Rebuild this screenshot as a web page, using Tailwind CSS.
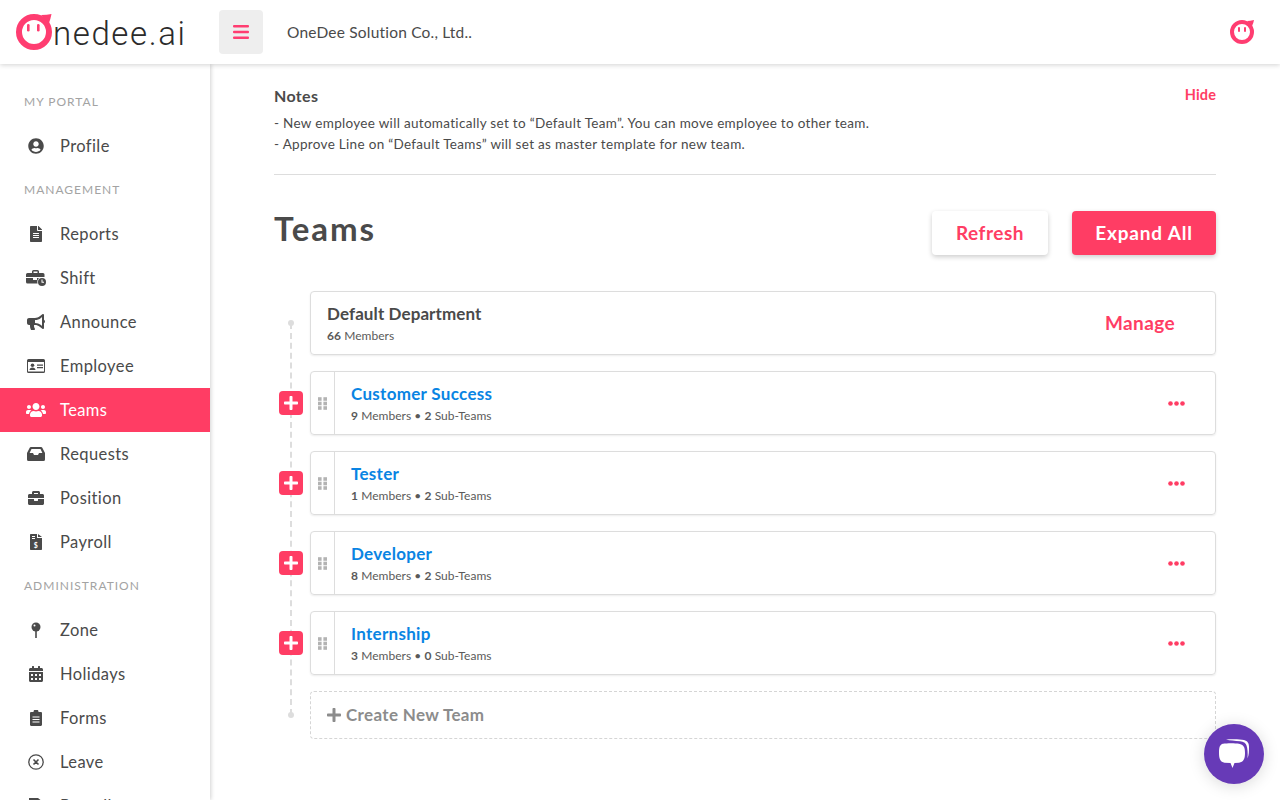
<!DOCTYPE html>
<html lang="en">
<head>
  <meta charset="UTF-8" />
  <meta name="viewport" content="width=device-width, initial-scale=1.0" />
  <script src="https://cdn.jsdelivr.net/npm/@tailwindcss/browser@4"></script>
  <title>Teams</title>
</head>
<body class="h-screen overflow-hidden bg-white font-['Lato','Noto_Sans',sans-serif] text-[#4a4a4a]">
  <!-- top bar -->
  <header class="relative z-20 h-16 bg-white shadow-[0_1px_5px_rgba(0,0,0,0.18)] flex items-center">
    <div class="w-[219px] pl-[15px] flex items-center">
      <svg class="w-[38px] h-[38px] shrink-0" viewBox="0 0 38 38">
        <circle cx="19" cy="19" r="15" fill="#fff" stroke="#ff3d71" stroke-width="6"/>
        <path d="M26 2Q32 2 36.500 1Q35.500 6 34 10z" fill="#ff3d71"/>
        <rect x="12" y="11" width="2.600" height="7.500" rx="1.300" fill="#ff3d71"/>
        <rect x="22" y="11" width="2.600" height="7.500" rx="1.300" fill="#ff3d71"/>
      </svg>
      <span class="font-['Roboto'] font-light text-[33px] leading-none tracking-[1.6px] text-[#2b2b2b] mt-[3px]">nedee.ai</span>
    </div>
    <button class="w-11 h-11 rounded bg-[#eeeeee] flex items-center justify-center">
      <svg class="w-4 h-[14px]" viewBox="0 0 16 14" fill="#ff3d71"><rect width="16" height="2.600" rx="1"/><rect y="5.700" width="16" height="2.600" rx="1"/><rect y="11.400" width="16" height="2.600" rx="1"/></svg>
    </button>
    <span class="ml-6 mt-[2px] text-[15.500px] tracking-[0.2px]">OneDee Solution Co., Ltd..</span>
    <svg class="ml-auto mr-[25px] w-[26px] h-[26px]" viewBox="0 0 26 26">
      <circle cx="13" cy="13" r="10" fill="#fff" stroke="#ff3d71" stroke-width="4"/>
      <path d="M18 2Q21 2 25 1Q24.500 4 23 7z" fill="#ff3d71"/>
      <rect x="9" y="8" width="2" height="5" rx="1" fill="#ff3d71"/>
      <rect x="15" y="8" width="2" height="5" rx="1" fill="#ff3d71"/>
    </svg>
  </header>

  <div class="flex h-[736px]">
    <!-- sidebar -->
    <aside class="relative z-10 w-[210px] shrink-0 h-full overflow-hidden bg-white shadow-[1px_0_4px_rgba(0,0,0,0.18)] pt-4 text-[16.500px] tracking-[0.4px]">
      <div class="h-11 pl-6 flex items-center text-[12px] tracking-[1px] text-[#a3a3a3]">MY PORTAL</div>
      <a class="h-11 flex items-center">
        <span class="w-[60px] flex justify-center pl-[12px]"><svg class="w-[16px] h-[16px]" viewBox="0 0 496 512" fill="#4a4a4a"><path d="M248 8C111 8 0 119 0 256s111 248 248 248 248-111 248-248S385 8 248 8zm0 96c48.6 0 88 39.4 88 88s-39.4 88-88 88-88-39.4-88-88 39.4-88 88-88zm0 344c-58.7 0-111.3-26.6-146.5-68.2 18.8-35.4 55.6-59.8 98.5-59.8 2.4 0 4.8.4 7.1 1.1 13 4.2 26.6 6.9 40.9 6.9 14.3 0 28-2.7 40.9-6.9 2.3-.7 4.7-1.1 7.1-1.1 42.9 0 79.7 24.4 98.5 59.8C359.3 421.4 306.7 448 248 448z"/></svg></span>
        Profile
      </a>
      <div class="h-11 pl-6 flex items-center text-[12px] tracking-[1px] text-[#a3a3a3]">MANAGEMENT</div>
      <a class="h-11 flex items-center">
        <span class="w-[60px] flex justify-center pl-[12px]"><svg class="w-[16px] h-[16px]" viewBox="0 0 384 512" fill="#4a4a4a"><path d="M224 136V0H24C10.7 0 0 10.7 0 24v464c0 13.3 10.7 24 24 24h336c13.3 0 24-10.7 24-24V160H248c-13.2 0-24-10.8-24-24zm64 236c0 6.6-5.4 12-12 12H108c-6.6 0-12-5.4-12-12v-8c0-6.6 5.4-12 12-12h168c6.6 0 12 5.4 12 12v8zm0-64c0 6.6-5.4 12-12 12H108c-6.6 0-12-5.4-12-12v-8c0-6.6 5.4-12 12-12h168c6.6 0 12 5.4 12 12v8zm0-72v8c0 6.6-5.4 12-12 12H108c-6.6 0-12-5.4-12-12v-8c0-6.6 5.4-12 12-12h168c6.6 0 12 5.4 12 12zm96-114.1v6.1H256V0h6.1c6.4 0 12.5 2.5 17 7l97.9 98c4.5 4.5 7 10.6 7 16.9z"/></svg></span>
        Reports
      </a>
      <a class="h-11 flex items-center">
        <span class="w-[60px] flex justify-center pl-[12px]"><svg class="w-[20px] h-[16px]" viewBox="0 0 20 16" fill="#4a4a4a"><path d="M6 1.500A1.500 1.500 0 0 1 7.500 0h4A1.500 1.500 0 0 1 13 1.500V3h4a1.500 1.500 0 0 1 1.500 1.500V7H0V4.500A1.500 1.500 0 0 1 1.500 3H6zM7.500 1.500V3h4V1.500zM0 8h7v2h4V8h2a5.500 5.500 0 0 0-1.400 5.500H1.500A1.500 1.500 0 0 1 0 12z"/><circle cx="16" cy="12" r="4"/><path d="M15.500 9.500h1v2.200h1.500v1h-2.500z" fill="#fff"/></svg></span>
        Shift
      </a>
      <a class="h-11 flex items-center">
        <span class="w-[60px] flex justify-center pl-[12px]"><svg class="w-[18px] h-[16px]" viewBox="0 0 576 512" fill="#4a4a4a"><path d="M576 240c0-23.63-12.95-44.04-32-55.12V32.01C544 23.26 537.02 0 512 0c-7.12 0-14.19 2.38-19.98 7.02l-85.03 68.03C364.28 109.19 310.66 128 256 128H64c-35.35 0-64 28.65-64 64v96c0 35.35 28.65 64 64 64h33.7c-1.39 10.48-2.18 21.14-2.18 32 0 39.77 9.26 77.35 25.56 110.94 5.19 10.69 16.52 17.06 28.4 17.06h74.28c26.05 0 41.69-29.84 25.9-50.56-16.4-21.52-26.15-48.36-26.15-77.44 0-11.11 1.62-21.79 4.41-32H256c54.66 0 108.28 18.81 150.98 52.95l85.03 68.03a32.023 32.023 0 0 0 19.98 7.02c24.92 0 32-22.78 32-32V295.13C563.05 284.04 576 263.63 576 240zm-96 141.42l-33.05-26.44C392.95 311.78 325.12 288 256 288v-96c69.12 0 136.95-23.78 190.95-66.98L480 98.58v282.84z"/></svg></span>
        Announce
      </a>
      <a class="h-11 flex items-center">
        <span class="w-[60px] flex justify-center pl-[12px]"><svg class="w-[18px] h-[14px]" viewBox="0 0 18 14" fill="#4a4a4a"><path fill-rule="evenodd" d="M1.500 0h15A1.500 1.500 0 0 1 18 1.500v11a1.500 1.500 0 0 1-1.500 1.500h-15A1.500 1.500 0 0 1 0 12.500v-11A1.500 1.500 0 0 1 1.500 0zM1 3v9.500h16V3z"/><circle cx="5.500" cy="6.300" r="1.800"/><path d="M2.500 11c0-1.500 1.300-2.400 3-2.400s3 .9 3 2.400zM10 5.500h6v1.200h-6zM10 8h6v1.200h-6z"/></svg></span>
        Employee
      </a>
      <a class="h-11 flex items-center bg-[#ff3d64] text-white">
        <span class="w-[60px] flex justify-center pl-[12px]"><svg class="w-[20px] h-[16px]" viewBox="0 0 640 512" fill="#fff"><path d="M96 224c35.3 0 64-28.7 64-64s-28.7-64-64-64-64 28.7-64 64 28.7 64 64 64zm448 0c35.3 0 64-28.7 64-64s-28.7-64-64-64-64 28.7-64 64 28.7 64 64 64zm32 32h-64c-17.6 0-33.5 7.100-45.100 18.600 40.300 22.100 68.900 62 75.100 109.400h66c17.700 0 32-14.300 32-32v-32c0-35.300-28.700-64-64-64zm-256 0c61.900 0 112-50.100 112-112S381.900 32 320 32 208 82.100 208 144s50.100 112 112 112zm76.800 32h-8.300c-20.800 10-43.900 16-68.500 16s-47.600-6-68.500-16h-8.300C179.600 288 128 339.600 128 403.200V432c0 26.500 21.500 48 48 48h288c26.500 0 48-21.500 48-48v-28.800c0-63.600-51.600-115.200-115.200-115.200zm-223.700-13.400C161.500 263.100 145.600 256 128 256H64c-35.300 0-64 28.700-64 64v32c0 17.700 14.300 32 32 32h65.900c6.300-47.400 34.900-87.300 75.200-109.400z"/></svg></span>
        Teams
      </a>
      <a class="h-11 flex items-center">
        <span class="w-[60px] flex justify-center pl-[12px]"><svg class="w-[18px] h-[14px]" viewBox="0 0 18 14" fill="#4a4a4a"><path fill-rule="evenodd" d="M4 0h10a1.500 1.500 0 0 1 1.300.7L18 6v6.500a1.500 1.500 0 0 1-1.500 1.500h-15A1.500 1.500 0 0 1 0 12.500V6L2.700.7A1.500 1.500 0 0 1 4 0zm.5 2L2.600 6H6l1 2h4l1-2h3.400l-1.900-4z"/></svg></span>
        Requests
      </a>
      <a class="h-11 flex items-center">
        <span class="w-[60px] flex justify-center pl-[12px]"><svg class="w-[16px] h-[16px]" viewBox="0 0 512 512" fill="#4a4a4a"><path d="M320 336c0 8.840-7.160 16-16 16h-96c-8.840 0-16-7.160-16-16v-48H0v144c0 25.600 22.400 48 48 48h416c25.600 0 48-22.400 48-48V288H320v48zm144-208h-80V80c0-25.600-22.400-48-48-48H176c-25.600 0-48 22.400-48 48v48H48c-25.600 0-48 22.400-48 48v80h512v-80c0-25.600-22.400-48-48-48zm-144 0H192V96h128v32z"/></svg></span>
        Position
      </a>
      <a class="h-11 flex items-center">
        <span class="w-[60px] flex justify-center pl-[12px]"><svg class="w-[12px] h-[16px]" viewBox="0 0 12 16"><path d="M0 .7C0 .3.300 0 .7 0H7v4h5v11.300c0 .4-.3.700-.7.700H.7c-.4 0-.7-.3-.7-.7z M8 0l4 3H8z" fill="#4a4a4a"/><path d="M2 2h3v1H2zM2 4h3v1H2z" fill="#fff"/><text x="6" y="13.500" font-size="7" font-weight="700" text-anchor="middle" fill="#fff">$</text></svg></span>
        Payroll
      </a>
      <div class="h-11 pl-6 flex items-center text-[12px] tracking-[1px] text-[#a3a3a3]">ADMINISTRATION</div>
      <a class="h-11 flex items-center">
        <span class="w-[60px] flex justify-center pl-[12px]"><svg class="w-[10px] h-[16px]" viewBox="0 0 10 16"><circle cx="5" cy="5" r="4.500" fill="#4a4a4a"/><rect x="4.200" y="9" width="1.600" height="7" fill="#4a4a4a"/><circle cx="3.500" cy="3.500" r="1" fill="#fff"/></svg></span>
        Zone
      </a>
      <a class="h-11 flex items-center">
        <span class="w-[60px] flex justify-center pl-[12px]"><svg class="w-[14px] h-[16px]" viewBox="0 0 448 512" fill="#4a4a4a"><path d="M0 464c0 26.500 21.500 48 48 48h352c26.500 0 48-21.500 48-48V192H0v272zm320-196c0-6.600 5.400-12 12-12h40c6.600 0 12 5.400 12 12v40c0 6.600-5.400 12-12 12h-40c-6.600 0-12-5.400-12-12v-40zm0 128c0-6.600 5.400-12 12-12h40c6.600 0 12 5.400 12 12v40c0 6.600-5.400 12-12 12h-40c-6.600 0-12-5.400-12-12v-40zM192 268c0-6.600 5.400-12 12-12h40c6.600 0 12 5.400 12 12v40c0 6.600-5.400 12-12 12h-40c-6.600 0-12-5.400-12-12v-40zm0 128c0-6.600 5.400-12 12-12h40c6.600 0 12 5.400 12 12v40c0 6.600-5.400 12-12 12h-40c-6.600 0-12-5.400-12-12v-40zM64 268c0-6.600 5.400-12 12-12h40c6.600 0 12 5.400 12 12v40c0 6.600-5.400 12-12 12H76c-6.600 0-12-5.400-12-12v-40zm0 128c0-6.600 5.400-12 12-12h40c6.600 0 12 5.400 12 12v40c0 6.600-5.400 12-12 12H76c-6.600 0-12-5.400-12-12v-40zM400 64h-48V16c0-8.800-7.200-16-16-16h-32c-8.800 0-16 7.200-16 16v48H160V16c0-8.800-7.200-16-16-16h-32c-8.800 0-16 7.200-16 16v48H48C21.500 64 0 85.500 0 112v48h448v-48c0-26.500-21.500-48-48-48z"/></svg></span>
        Holidays
      </a>
      <a class="h-11 flex items-center">
        <span class="w-[60px] flex justify-center pl-[12px]"><svg class="w-[12px] h-[16px]" viewBox="0 0 12 16"><path d="M1.200 2H3.500A2.500 2.500 0 0 1 8.500 2h2.300c.7 0 1.200.5 1.200 1.200v11.600c0 .7-.5 1.200-1.200 1.200H1.200C.5 16 0 15.500 0 14.800V3.200C0 2.500.5 2 1.200 2z" fill="#4a4a4a"/><path d="M2.500 6.500h7v1h-7zM2.500 9h7v1h-7zM2.500 11.500h7v1h-7z" fill="#fff"/></svg></span>
        Forms
      </a>
      <a class="h-11 flex items-center">
        <span class="w-[60px] flex justify-center pl-[12px]"><svg class="w-[16px] h-[16px]" viewBox="0 0 16 16" fill="none" stroke="#4a4a4a"><circle cx="8" cy="8" r="7.200" stroke-width="1.300"/><path d="M5.500 5.500l5 5M10.500 5.500l-5 5" stroke-width="1.600"/></svg></span>
        Leave
      </a>
      <a class="h-11 flex items-center">
        <span class="w-[60px] flex justify-center pl-[12px]"><svg class="w-[14px] h-[16px]" viewBox="0 0 14 16" fill="#4a4a4a"><path d="M0 0h9l5 4v12H0z"/></svg></span>
        Payroll
      </a>
    </aside>

    <!-- main -->
    <main class="flex-1 pl-[64px] pr-[64px] pt-[22px]">
      <div class="border-b border-[#dddddd] h-[89px]">
        <div class="flex justify-between items-start">
          <h3 class="font-bold text-[16px] leading-[20px] tracking-[0.35px]">Notes</h3>
          <a class="font-bold text-[14.500px] leading-[18px] tracking-[0.1px] text-[#ff3d64]">Hide</a>
        </div>
        <p class="mt-[7px] text-[13.500px] leading-[21px] tracking-[0.31px]">- New employee will automatically set to “Default Team”. You can move employee to other team.<br>- Approve Line on “Default Teams” will set as master template for new team.</p>
      </div>

      <div class="mt-[36px] flex items-start">
        <h1 class="font-bold text-[33px] leading-[34px] tracking-[1.9px]">Teams</h1>
        <button class="ml-auto w-[116px] h-11 rounded bg-white shadow-[0_2px_5px_rgba(0,0,0,0.2)] font-bold text-[19px] tracking-[0.5px] text-[#ff3d64]">Refresh</button>
        <button class="ml-6 w-[144px] h-11 rounded bg-[#ff3d64] shadow-[0_2px_5px_rgba(0,0,0,0.2)] font-bold text-[19px] tracking-[0.8px] text-white">Expand All</button>
      </div>

      <!-- team tree -->
      <div class="relative mt-[36px]">
        <div class="absolute left-[16px] top-[32px] bottom-[24px] border-l-2 border-dashed border-[#dddddd]"></div>
        <div class="absolute left-[14px] top-[29px] w-[6px] h-[6px] rounded-full bg-[#dddddd]"></div>
        <div class="absolute left-[14px] bottom-[21px] w-[6px] h-[6px] rounded-full bg-[#dddddd]"></div>

        <div class="ml-9 h-16 rounded border border-[#dddddd] shadow-[0_1px_2px_rgba(0,0,0,0.08)] pl-4 pr-10 flex items-center justify-between">
          <div class="mt-[1px]">
            <div class="font-bold text-[17px] leading-[22px] tracking-[0.1px] -mt-[1px]">Default Department</div>
            <div class="text-[12px] leading-[16px] mt-[3px] tracking-[0.05px] text-[#5a5a5a]"><b>66</b> Members</div>
          </div>
          <a class="font-bold text-[19px] tracking-[0.4px] text-[#ff3d64]">Manage</a>
        </div>

        <div class="relative mt-4 h-16 flex items-center">
          <button class="relative ml-[5px] w-6 h-6 rounded bg-[#ff3d64] flex items-center justify-center"><svg class="w-4 h-4" viewBox="0 0 448 512" fill="#fff"><path d="M416 208H272V64c0-17.670-14.330-32-32-32h-32c-17.670 0-32 14.330-32 32v144H32c-17.670 0-32 14.330-32 32v32c0 17.670 14.330 32 32 32h144v144c0 17.670 14.330 32 32 32h32c17.670 0 32-14.330 32-32V304h144c17.670 0 32-14.330 32-32v-32c0-17.670-14.330-32-32-32z"/></svg></button>
          <div class="ml-[7px] flex-1 h-16 rounded border border-[#dddddd] shadow-[0_1px_2px_rgba(0,0,0,0.08)] flex items-center">
            <div class="w-6 h-full border-r border-[#dddddd] flex items-center justify-center"><svg class="w-[9px] h-[13px]" viewBox="0 0 10 14" fill="#b3b3b3"><rect width="4" height="4"/><rect x="6" width="4" height="4"/><rect y="5" width="4" height="4"/><rect x="6" y="5" width="4" height="4"/><rect y="10" width="4" height="4"/><rect x="6" y="10" width="4" height="4"/></svg></div>
            <div class="pl-4 flex-1 mt-[1px]">
              <div class="font-bold text-[17px] leading-[22px] tracking-[0.3px] text-[#0984e3] -mt-[1px]">Customer Success</div>
              <div class="text-[12px] leading-[16px] mt-[3px] tracking-[0.05px] text-[#5a5a5a]"><b>9</b> Members • <b>2</b> Sub-Teams</div>
            </div>
            <svg class="mr-[30px] w-[17px] h-[5px]" viewBox="0 0 17 5" fill="#ff3d64"><circle cx="2.500" cy="2.500" r="2.300"/><circle cx="8.500" cy="2.500" r="2.300"/><circle cx="14.500" cy="2.500" r="2.300"/></svg>
          </div>
        </div>

        <div class="relative mt-4 h-16 flex items-center">
          <button class="relative ml-[5px] w-6 h-6 rounded bg-[#ff3d64] flex items-center justify-center"><svg class="w-4 h-4" viewBox="0 0 448 512" fill="#fff"><path d="M416 208H272V64c0-17.670-14.330-32-32-32h-32c-17.670 0-32 14.330-32 32v144H32c-17.670 0-32 14.330-32 32v32c0 17.670 14.330 32 32 32h144v144c0 17.670 14.330 32 32 32h32c17.670 0 32-14.330 32-32V304h144c17.670 0 32-14.330 32-32v-32c0-17.670-14.330-32-32-32z"/></svg></button>
          <div class="ml-[7px] flex-1 h-16 rounded border border-[#dddddd] shadow-[0_1px_2px_rgba(0,0,0,0.08)] flex items-center">
            <div class="w-6 h-full border-r border-[#dddddd] flex items-center justify-center"><svg class="w-[9px] h-[13px]" viewBox="0 0 10 14" fill="#b3b3b3"><rect width="4" height="4"/><rect x="6" width="4" height="4"/><rect y="5" width="4" height="4"/><rect x="6" y="5" width="4" height="4"/><rect y="10" width="4" height="4"/><rect x="6" y="10" width="4" height="4"/></svg></div>
            <div class="pl-4 flex-1 mt-[1px]">
              <div class="font-bold text-[17px] leading-[22px] tracking-[0.3px] text-[#0984e3] -mt-[1px]">Tester</div>
              <div class="text-[12px] leading-[16px] mt-[3px] tracking-[0.05px] text-[#5a5a5a]"><b>1</b> Members • <b>2</b> Sub-Teams</div>
            </div>
            <svg class="mr-[30px] w-[17px] h-[5px]" viewBox="0 0 17 5" fill="#ff3d64"><circle cx="2.500" cy="2.500" r="2.300"/><circle cx="8.500" cy="2.500" r="2.300"/><circle cx="14.500" cy="2.500" r="2.300"/></svg>
          </div>
        </div>

        <div class="relative mt-4 h-16 flex items-center">
          <button class="relative ml-[5px] w-6 h-6 rounded bg-[#ff3d64] flex items-center justify-center"><svg class="w-4 h-4" viewBox="0 0 448 512" fill="#fff"><path d="M416 208H272V64c0-17.670-14.330-32-32-32h-32c-17.670 0-32 14.330-32 32v144H32c-17.670 0-32 14.330-32 32v32c0 17.670 14.330 32 32 32h144v144c0 17.670 14.330 32 32 32h32c17.670 0 32-14.330 32-32V304h144c17.670 0 32-14.330 32-32v-32c0-17.670-14.330-32-32-32z"/></svg></button>
          <div class="ml-[7px] flex-1 h-16 rounded border border-[#dddddd] shadow-[0_1px_2px_rgba(0,0,0,0.08)] flex items-center">
            <div class="w-6 h-full border-r border-[#dddddd] flex items-center justify-center"><svg class="w-[9px] h-[13px]" viewBox="0 0 10 14" fill="#b3b3b3"><rect width="4" height="4"/><rect x="6" width="4" height="4"/><rect y="5" width="4" height="4"/><rect x="6" y="5" width="4" height="4"/><rect y="10" width="4" height="4"/><rect x="6" y="10" width="4" height="4"/></svg></div>
            <div class="pl-4 flex-1 mt-[1px]">
              <div class="font-bold text-[17px] leading-[22px] tracking-[0.3px] text-[#0984e3] -mt-[1px]">Developer</div>
              <div class="text-[12px] leading-[16px] mt-[3px] tracking-[0.05px] text-[#5a5a5a]"><b>8</b> Members • <b>2</b> Sub-Teams</div>
            </div>
            <svg class="mr-[30px] w-[17px] h-[5px]" viewBox="0 0 17 5" fill="#ff3d64"><circle cx="2.500" cy="2.500" r="2.300"/><circle cx="8.500" cy="2.500" r="2.300"/><circle cx="14.500" cy="2.500" r="2.300"/></svg>
          </div>
        </div>

        <div class="relative mt-4 h-16 flex items-center">
          <button class="relative ml-[5px] w-6 h-6 rounded bg-[#ff3d64] flex items-center justify-center"><svg class="w-4 h-4" viewBox="0 0 448 512" fill="#fff"><path d="M416 208H272V64c0-17.670-14.330-32-32-32h-32c-17.670 0-32 14.330-32 32v144H32c-17.670 0-32 14.330-32 32v32c0 17.670 14.330 32 32 32h144v144c0 17.670 14.330 32 32 32h32c17.670 0 32-14.330 32-32V304h144c17.670 0 32-14.330 32-32v-32c0-17.670-14.330-32-32-32z"/></svg></button>
          <div class="ml-[7px] flex-1 h-16 rounded border border-[#dddddd] shadow-[0_1px_2px_rgba(0,0,0,0.08)] flex items-center">
            <div class="w-6 h-full border-r border-[#dddddd] flex items-center justify-center"><svg class="w-[9px] h-[13px]" viewBox="0 0 10 14" fill="#b3b3b3"><rect width="4" height="4"/><rect x="6" width="4" height="4"/><rect y="5" width="4" height="4"/><rect x="6" y="5" width="4" height="4"/><rect y="10" width="4" height="4"/><rect x="6" y="10" width="4" height="4"/></svg></div>
            <div class="pl-4 flex-1 mt-[1px]">
              <div class="font-bold text-[17px] leading-[22px] tracking-[0.3px] text-[#0984e3] -mt-[1px]">Internship</div>
              <div class="text-[12px] leading-[16px] mt-[3px] tracking-[0.05px] text-[#5a5a5a]"><b>3</b> Members • <b>0</b> Sub-Teams</div>
            </div>
            <svg class="mr-[30px] w-[17px] h-[5px]" viewBox="0 0 17 5" fill="#ff3d64"><circle cx="2.500" cy="2.500" r="2.300"/><circle cx="8.500" cy="2.500" r="2.300"/><circle cx="14.500" cy="2.500" r="2.300"/></svg>
          </div>
        </div>

        <div class="ml-9 mt-4 h-12 rounded border border-dashed border-[#d5d5d5] pl-[15px] flex items-center font-bold text-[17px] tracking-[0.35px] text-[#8c8c8c]">
          <svg class="w-4 h-4 mr-[4px]" viewBox="0 0 448 512" fill="#8c8c8c"><path d="M416 208H272V64c0-17.670-14.330-32-32-32h-32c-17.670 0-32 14.330-32 32v144H32c-17.670 0-32 14.330-32 32v32c0 17.670 14.330 32 32 32h144v144c0 17.670 14.330 32 32 32h32c17.670 0 32-14.330 32-32V304h144c17.670 0 32-14.330 32-32v-32c0-17.670-14.330-32-32-32z"/></svg>
          Create New Team
        </div>
      </div>
    </main>
  </div>

  <!-- chat launcher -->
  <button class="fixed z-30 right-4 bottom-4 w-[60px] h-[60px] rounded-full bg-[#673ab7] shadow-[0_2px_16px_rgba(0,0,0,0.15)] flex items-center justify-center">
    <svg class="w-8 h-8" viewBox="0 0 32 32" fill="#fff">
      <path d="M8 1.500C14 1 22 1 26 2C29.500 3 31 5 31 9C31 13 31 17 29.500 20.500C30 15 29.500 10 28.500 7.500C27.500 5 26 3.800 22 3.300C17 2.800 12 2.600 8 1.500z"/>
      <path d="M5 5.800C9 5 17 5 21 5.800C25.500 6.600 27 9 27 15C27 21 25.500 24 21 24.700L16.500 25L14.500 30L12.500 25L6.500 24.700C2.500 24 1 21 1 15C1 9 2 6.500 5 5.800z"/>
    </svg>
  </button>
</body>
</html>
